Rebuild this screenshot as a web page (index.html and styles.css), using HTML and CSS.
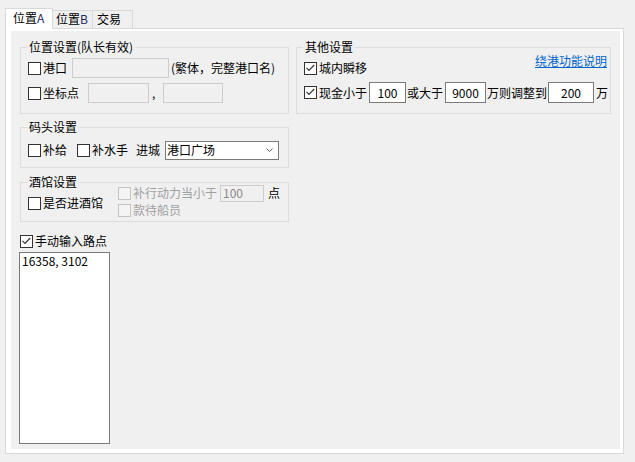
FILE: index.html
```html
<!DOCTYPE html>
<html>
<head>
<meta charset="utf-8">
<link rel="stylesheet" href="styles.css">
</head>
<body>
<div class="tabs">
  <div class="tab sel">位置<span class="lat">A</span></div>
  <div class="tab b">位置<span class="lat">B</span></div>
  <div class="tab c">交易</div>
</div>
<div class="pane">
  <div class="page">
    <div class="top-row">
      <fieldset class="grp g1">
        <legend>位置设置(队长有效)</legend>
        <div class="row">
          <label class="chk"><span class="box"></span>港口</label>
          <span class="edit dis port"></span>
          <span class="hint">(繁体，完整港口名)</span>
        </div>
        <div class="row r2">
          <label class="chk"><span class="box"></span>坐标点</label>
          <span class="edit dis cx"></span>
          <span class="comma">,</span>
          <span class="edit dis cy"></span>
        </div>
      </fieldset>
      <fieldset class="grp g2">
        <legend>其他设置</legend>
        <div class="row head">
          <label class="chk"><span class="box"><svg width="11" height="11" viewBox="0 0 11 11"><path d="M1.5 4.8 L4 7.3 L9.2 2" fill="none" stroke="#333" stroke-width="1.2"/></svg></span>城内瞬移</label>
          <a class="link" href="#">绕港功能说明</a>
        </div>
        <div class="row cash">
          <label class="chk"><span class="box"><svg width="11" height="11" viewBox="0 0 11 11"><path d="M1.5 4.8 L4 7.3 L9.2 2" fill="none" stroke="#333" stroke-width="1.2"/></svg></span>现金小于</label>
          <span class="edit num n1">100</span>
          <span class="t1">或大于</span>
          <span class="edit num n2">9000</span>
          <span class="t1">万则调整到</span>
          <span class="edit num n3">200</span>
          <span class="t2">万</span>
        </div>
      </fieldset>
    </div>
    <fieldset class="grp g3">
      <legend>码头设置</legend>
      <div class="row">
        <label class="chk"><span class="box"></span>补给</label>
        <label class="chk sailor"><span class="box"></span>补水手</label>
        <span class="enter">进城</span>
        <div class="combo"><span>港口广场</span><svg width="7" height="4" viewBox="0 0 7 4"><path d="M0.5 0.5 L3.5 3.5 L6.5 0.5" fill="none" stroke="#606060"/></svg></div>
      </div>
    </fieldset>
    <fieldset class="grp g4">
      <legend>酒馆设置</legend>
      <div class="tavern">
        <label class="chk tav-left"><span class="box"></span>是否进酒馆</label>
        <div class="tav-right">
          <div class="trow">
            <label class="chk dis"><span class="box"></span>补行动力当小于</label>
            <span class="edit dis small">100</span>
            <span class="pt">点</span>
          </div>
          <label class="chk dis"><span class="box"></span>款待船员</label>
        </div>
      </div>
    </fieldset>
    <div class="manual">
      <label class="chk"><span class="box"><svg width="11" height="11" viewBox="0 0 11 11"><path d="M1.5 4.8 L4 7.3 L9.2 2" fill="none" stroke="#333" stroke-width="1.2"/></svg></span>手动输入路点</label>
    </div>
    <div class="memo">16358, 3102</div>
  </div>
</div>
</body>
</html>
```
FILE: styles.css
```css
body {
  margin: 0;
  width: 635px;
  height: 462px;
  overflow: hidden;
  background: #f0f0f0;
  font-family: "Noto Sans CJK SC", "Noto Sans", sans-serif;
  font-size: 12px;
  line-height: 16px;
  color: #000;
}

.tabs {
  display: flex;
  align-items: flex-end;
  height: 21px;
  margin: 8px 0 -1px 5px;
  position: relative;
  z-index: 1;
}
.tab {
  box-sizing: border-box;
  height: 18px;
  margin-bottom: 1px;
  border: 1px solid #d9d9d9;
  border-bottom: none;
  background: #f0f0f0;
  white-space: nowrap;
}
.tab.sel {
  width: 48px;
  height: 21px;
  margin-bottom: 0;
  background: #fff;
  padding: 1px 0 0 7px;
}
.tab.b {
  width: 40px;
  border-left: none;
  padding-left: 3px;
}
.tab.c {
  width: 40px;
  border-left: none;
  padding-left: 4px;
}
.lat { color: #1e2a5a; }

.pane {
  box-sizing: border-box;
  width: 619px;
  height: 426px;
  margin-left: 5px;
  border: 1px solid #d9d9d9;
  background: #fff;
  padding: 2px 3px 4px 5px;
}
.page {
  box-sizing: border-box;
  height: 100%;
  background: #f0f0f0;
  padding: 8px 0 0 9px;
}

.top-row {
  display: flex;
  gap: 7px;
}
.grp {
  box-sizing: border-box;
  margin: 0;
  min-width: 0;
  border: 1px solid #dcdcdc;
  padding: 3px 3px 10px 7px;
}
.grp legend {
  padding: 0 2px;
  margin-left: -1px;
  line-height: 16px;
}
.g1, .g3, .g4 { width: 269px; }
.g2 { width: 315px; }
.g3 { margin-top: 5px; padding-top: 5px; padding-bottom: 7px; }
.g4 { margin-top: 6px; padding-top: 0; padding-bottom: 3px; }

.row {
  display: flex;
  align-items: center;
  height: 20px;
  white-space: nowrap;
}
.row > * { flex: none; }
.r2 { margin-top: 5px; }

.chk {
  display: inline-flex;
  align-items: center;
  gap: 2px;
  white-space: nowrap;
}
.box {
  box-sizing: border-box;
  width: 13px;
  height: 13px;
  border: 1px solid #333;
  background: #fff;
  display: flex;
}
.box svg { display: block; }
.chk.dis { color: #a0a0a0; }
.chk.dis .box { border-color: #c4c4c4; background: #f4f4f4; }

.edit {
  box-sizing: border-box;
  height: 20px;
  border: 1px solid #7a7a7a;
  background: #fff;
  display: flex;
  align-items: center;
  justify-content: center;
}
.edit.dis {
  border-color: #cccccc;
  background: #f0f0f0;
  color: #8a8a8a;
}
.port { width: 97px; margin-left: 5px; }
.hint { margin-left: 2px; }
.cx { width: 61px; margin-left: 9px; }
.comma { width: 14px; padding-left: 3px; box-sizing: border-box; }
.cy { width: 60px; }

.head {
  justify-content: space-between;
  align-items: center;
}
.link {
  align-self: flex-start;
  margin-top: -5px;
  color: #0066cc;
  text-decoration: underline;
}
.cash { margin-top: 4px; height: 21px; }
.num { height: 21px; }
.n1 { width: 37px; margin-left: 2px; }
.n2 { width: 41px; margin-left: 2px; }
.n3 { width: 46px; margin-left: 1px; }
.t1 { margin-left: 1px; }
.t2 { margin-left: 2px; }

.sailor { margin-left: 10px; }
.enter { margin-left: 8px; }
.combo {
  box-sizing: border-box;
  width: 114px;
  height: 19px;
  margin-left: 5px;
  border: 1px solid #7a7a7a;
  background: #fff;
  display: flex;
  align-items: center;
  justify-content: space-between;
  padding: 0 5px 0 1px;
}
.combo svg { display: block; }

.tavern {
  display: flex;
  align-items: flex-start;
}
.tav-left {
  width: 90px;
  flex: none;
  margin-top: 5px;
}
.tav-right {
  display: flex;
  flex-direction: column;
  margin-top: -6px;
}
.trow {
  display: flex;
  align-items: center;
  height: 18px;
  white-space: nowrap;
}
.edit.small {
  width: 44px;
  height: 17px;
  margin-left: 3px;
  justify-content: flex-start;
  padding-left: 2px;
}
.pt { margin-left: 4px; }

.manual {
  display: flex;
  margin-top: 11px;
}
.memo {
  box-sizing: border-box;
  width: 91px;
  height: 192px;
  margin: 3px 0 0 -1px;
  border: 1px solid #7a7a7a;
  background: #fff;
  padding: 0 2px;
  white-space: nowrap;
}
```
